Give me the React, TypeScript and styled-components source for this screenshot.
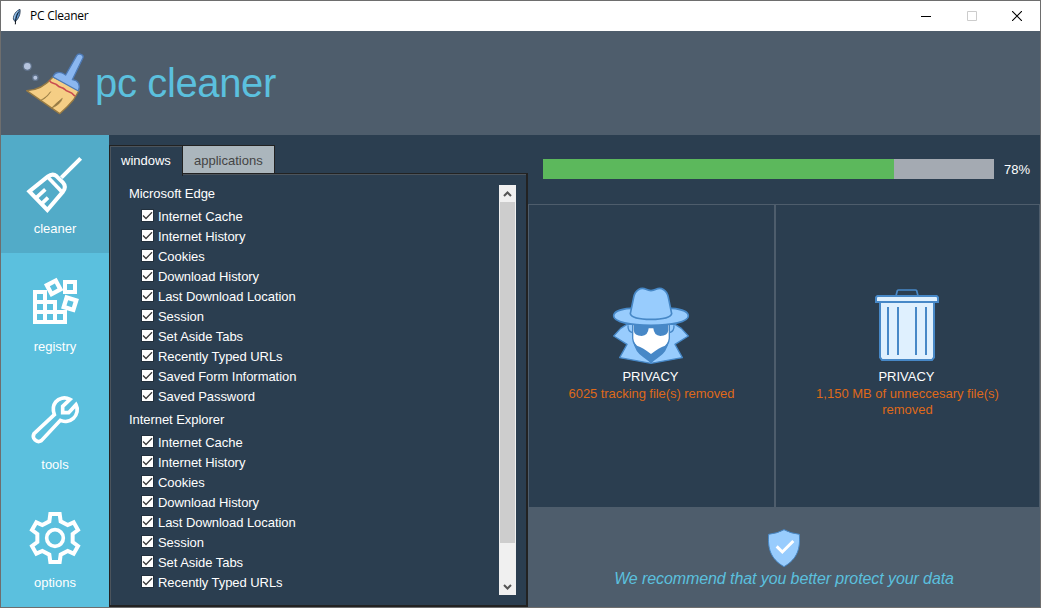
import React from "react";
import styled, { createGlobalStyle } from "styled-components";

const c = {
  bg: "#2b3e50",
  panel: "#4e5d6c",
  info: "#5bc0de",
  infoActive: "#52abc8",
  dark: "#222222",
  blue: "#98ccfd",
  blueLine: "#4788c7",
  orange: "#df691a",
};

const Global = createGlobalStyle`
  * { box-sizing: border-box; }
  body { margin: 0; font-family: "Liberation Sans", Arial, sans-serif; font-size: 13px; color: #fff; }
  svg { display: block; flex: none; }
`;

const Window = styled.div`
  width: 1041px;
  height: 608px;
  border: 1px solid #6e6e6e;
  background: ${c.bg};
  display: flex;
  flex-direction: column;
  overflow: hidden;
`;

const TitleBar = styled.div`
  height: 30px;
  flex: none;
  background: #fff;
  color: #000;
  display: flex;
  align-items: center;
  padding-left: 9px;
`;

const Title = styled.span`
  flex: 1;
  margin-left: 6px;
  font: 12px/16px "Open Sans", "Noto Sans", sans-serif;
  letter-spacing: -0.25px;
`;

const WindowButton = styled.div`
  width: 45.5px;
  height: 30px;
  display: flex;
  align-items: center;
  justify-content: center;
`;

const Header = styled.header`
  height: 104px;
  flex: none;
  background: ${c.panel};
  display: flex;
  align-items: center;
  padding-left: 20px;
`;

const Brand = styled.h1`
  margin: 0 0 0 8px;
  font-size: 40px;
  line-height: 46px;
  font-weight: 400;
  letter-spacing: -0.36px;
  color: ${c.info};
`;

const Body = styled.div`
  display: flex;
  flex: 1;
  min-height: 0;
`;

const Sidebar = styled.nav`
  width: 108px;
  flex: none;
  background: ${c.info};
`;

const NavItem = styled.div<{ $active?: boolean }>`
  height: 118px;
  padding-top: 18px;
  display: flex;
  flex-direction: column;
  align-items: center;
  background: ${(p) => (p.$active ? c.infoActive : c.info)};
`;

const NavLabel = styled.span`
  margin-top: 4px;
  line-height: 15px;
`;

const Notebook = styled.section`
  width: 419px;
  flex: none;
  padding-top: 10px;
  display: flex;
  flex-direction: column;
`;

const Tabs = styled.div`
  display: flex;
  height: 29px;
  margin-bottom: -1px;
  position: relative;
`;

const Tab = styled.div<{ $active?: boolean }>`
  width: ${(p) => (p.$active ? 74 : 92)}px;
  height: ${(p) => (p.$active ? 31 : 29)}px;
  line-height: 30px;
  padding-left: 11px;
  border: 1px solid ${c.dark};
  border-bottom-width: ${(p) => (p.$active ? 0 : 1)}px;
  border-left-width: ${(p) => (p.$active ? 1 : 0)}px;
  box-shadow: ${(p) => (p.$active ? "inset 1px 1px #4c545c" : "none")};
  background: ${(p) => (p.$active ? c.bg : "#abb6bd")};
  color: ${(p) => (p.$active ? "#fff" : "#444")};
`;

const Pane = styled.div`
  flex: 1;
  min-height: 0;
  border: 1px solid ${c.dark};
  border-right-width: 2px;
  border-bottom-width: 2px;
  box-shadow: inset 1px 1px #4c545c;
  display: flex;
  justify-content: space-between;
  padding: 6px 10px 0 19px;
`;

const List = styled.div`
  display: flex;
  flex-direction: column;
  letter-spacing: -0.05px;
`;

const GroupTitle = styled.div`
  height: 26px;
  line-height: 28px;
`;

const Row = styled.label`
  height: 20px;
  display: flex;
  align-items: center;
  padding-left: 12px;
  gap: 4px;
  white-space: nowrap;
`;

const Box = styled.span`
  width: 13px;
  height: 13px;
  margin-bottom: 2px;
  background: #fff;
  border: 1px solid #22303d;
`;

const Scrollbar = styled.div`
  width: 17px;
  height: 410px;
  margin-top: 5px;
  background: #f0f0f0;
  display: flex;
  flex-direction: column;
  justify-content: space-between;
  align-items: center;
`;

const Thumb = styled.div`
  width: 15px;
  height: 341px;
  margin-bottom: auto;
  background: #cdcdcd;
`;

const Right = styled.main`
  flex: 1;
  display: flex;
  flex-direction: column;
`;

const ProgressRow = styled.div`
  height: 69px;
  display: flex;
  align-items: flex-start;
  padding: 24px 0 0 15px;
  gap: 10px;
  line-height: 21px;
`;

const Track = styled.div`
  width: 451px;
  height: 20px;
  background: #a4aab2;
`;

const Fill = styled.div`
  height: 100%;
  background: #5cb85c;
`;

const Cards = styled.div`
  height: 303px;
  display: flex;
  border: 1px solid ${c.panel};
  border-bottom: 0;
`;

const Card = styled.div<{ $first?: boolean }>`
  width: ${(p) => (p.$first ? 247 : 263)}px;
  border-right: ${(p) => (p.$first ? `2px solid ${c.panel}` : "0")};
  display: flex;
  flex-direction: column;
  align-items: center;
  padding: 80px 2px 0 0;
  line-height: 16px;
  text-align: center;
`;

const CardIcon = styled.div`
  height: 84px;
  display: flex;
  align-items: center;
  padding-bottom: 5px;
`;

const Result = styled.span<{ $tight?: boolean }>`
  position: relative;
  top: 1px;
  left: 1px;
  color: ${c.orange};
  white-space: pre-line;
  letter-spacing: ${(p) => (p.$tight ? "-0.06px" : "0")};
`;

const Footer = styled.footer`
  flex: 1;
  background: ${c.panel};
  display: flex;
  flex-direction: column;
  align-items: center;
  padding-top: 21px;
`;

const Advice = styled.span`
  margin-top: 1px;
  font-size: 16px;
  line-height: 20px;
  font-style: italic;
  letter-spacing: -0.09px;
  color: ${c.info};
`;

const NavIcon = ({ top, children }: { top: number; children: React.ReactNode }) => (
  <svg width="64" height="64" viewBox={`69 ${top} 192 192`} fill="none" stroke="#fff" strokeWidth="12">
    {children}
  </svg>
);

const nav = [
  {
    label: "cleaner",
    icon: (
      <NavIcon top={54}>
        <path d="M242 70L184 128" />
        <path d="M88 169L143 125Q158 113 170 124L189 143Q200 155 189 170L142 225Z" />
        <path d="M141 124L184 169" strokeWidth="11" />
        <path d="M110 187L136 163M126 205L144 188" strokeWidth="11" />
      </NavIcon>
    ),
  },
  {
    label: "registry",
    icon: (
      <NavIcon top={48}>
        <path d="M105 111h30v90h-30zM135 141h30v60h-30zM165 171h30v30h-30zM105 141h30M105 171h60M195 81h30v30h-30z" />
        <g strokeWidth="13">
          <rect x="146" y="82" width="30" height="30" transform="rotate(-28 161 97)" />
          <rect x="195" y="131" width="30" height="30" transform="rotate(17 210 146)" />
        </g>
      </NavIcon>
    ),
  },
  {
    label: "tools",
    icon: (
      <NavIcon top={42}>
        <path d="M210 73C193 64 176 70 167 81C160 90 158 105 163 119L102 176A15.8 15.8 0 0 0 124 197L181 136C195 142 211 138 220 130C232 119 235 102 228 89L206 113H188V94Z" strokeWidth="11" />
      </NavIcon>
    ),
  },
  {
    label: "options",
    icon: (
      <NavIcon top={51}>
        <path d="M151 72H179L182 94L203 105L221 97L234 120L218 132V156L234 168L221 191L203 183L182 194L179 216H151L148 194L127 183L109 191L96 168L112 156V132L96 120L109 97L127 105L148 94Z" />
        <circle cx="165" cy="144" r="25" strokeWidth="11" />
      </NavIcon>
    ),
  },
];

const Feather = () => (
  <svg width="14" height="18" viewBox="30 15 42 54">
    <path d="M60 22C49 26 40 38 40 51L45 59C56 51 62 36 60 22Z" fill="#5b93cc" stroke="#26364a" strokeWidth="2.5" />
    <path d="M57 28C50 38 47 48 46 67" stroke="#080d14" strokeWidth="3" fill="none" />
    <path d="M55 27C47 34 43 42 43 50" stroke="#a9cdec" strokeWidth="3" fill="none" />
  </svg>
);

const Broom = () => (
  <svg width="66" height="65" viewBox="63 150 198 195">
    <circle cx="82" cy="196" r="14" fill="#60738b" />
    <circle cx="82" cy="196" r="10" fill="#b5c4de" />
    <circle cx="106" cy="230" r="10" fill="#60738b" />
    <circle cx="106" cy="230" r="6" fill="#b5c4de" />
    <path d="M159 228L238 267L220 297Q203 318 179 338L80 269C113 268 137 254 159 228Z" fill="#f5ce85" stroke="#967a44" strokeWidth="4" strokeLinejoin="round" />
    <path d="M152 272Q143 286 121 299Q140 292 152 272ZM187 292Q171 304 155 321Q181 311 187 292Z" fill="#967a44" stroke="#967a44" strokeWidth="2" />
    <path d="M148 238C154 249 164 246 171 252C179 262 187 257 194 265C203 276 209 266 225 286" fill="none" stroke="#c94b50" strokeWidth="5" />
    <path d="M159 228C164 213 180 209 197 222L230 164C236 155 252 160 249 170L217 236C236 238 242 254 235 270Z" fill="#8bb7f0" stroke="#4e7ab5" strokeWidth="4" strokeLinejoin="round" />
  </svg>
);

const Spy = () => (
  <svg width="78" height="78" viewBox="36 45 234 234" strokeLinejoin="round">
    <g fill={c.blue} stroke={c.blueLine} strokeWidth="4">
      <path d="M81 160L62 172L41 195L81 220L59 260L153 277L247 260L225 220L265 195L244 172L225 160Z" />
      <path d="M84 163Q83 181 97 185M222 163Q223 181 209 185" />
    </g>
    <path d="M98 160V202Q100 222 117 235Q135 247 153 275Q171 247 189 235Q206 222 208 202V160Z" fill="#fff" stroke={c.blueLine} strokeWidth="4" />
    <path d="M99 210L111 224Q129 230 153 249Q177 230 195 224L207 210Q200 244 178 257L153 276L128 257Q106 244 99 210Z" fill={c.blueLine} />
    <path d="M101 160H205V178Q203 195 181 195Q162 194 160 172H146Q144 194 125 195Q103 195 101 178Z" fill={c.blueLine} />
    <path d="M91 112C57 114 41 124 41 135C41 153 91 163 153 163S265 153 265 135C265 124 249 114 215 112Z" fill={c.blue} stroke={c.blueLine} strokeWidth="5" />
    <path d="M91 128L101 79C105 58 122 47 138 55C148 60 158 60 168 55C184 47 201 58 205 79L215 128C211 141 184 145 153 145S95 141 91 128Z" fill={c.blue} stroke={c.blueLine} strokeWidth="5" />
  </svg>
);

const Trash = () => (
  <svg width="66" height="75" viewBox="42 51 198 225" fill="#dff0fe" stroke={c.blueLine} strokeWidth="6">
    <path d="M108 77L112 62Q113 60 116 60H166Q169 60 170 62L174 77" fill="none" strokeWidth="5" />
    <path d="M60 96H222V262L216 270H66L60 262Z" />
    <path d="M48 96V82L52 78H230L234 82V96Z" />
    <path d="M84 111V255M114 111V255M168 111V255M198 111V255" />
  </svg>
);

const Shield = () => (
  <svg width="36" height="40" viewBox="78 84 108 120">
    <path d="M132 89Q151 100 178 103C181 143 174 176 132 200C90 176 83 143 86 103Q113 100 132 89Z" fill={c.blue} stroke={c.blueLine} strokeWidth="3" />
    <path d="M110 139L127 156L160 123" fill="none" stroke="#fff" strokeWidth="9" />
  </svg>
);

const Check = () => (
  <svg width="11" height="11" viewBox="0 0 11 11">
    <path d="M1 5.5L4 8.5L10 2.2" fill="none" stroke="#3a3a3a" strokeWidth="1.25" />
  </svg>
);

const Arrow = ({ down }: { down?: boolean }) => (
  <svg width="17" height="17" viewBox="0 0 17 17">
    <path d={down ? "M5 7L8.5 10.5L12 7" : "M5 11L8.5 7.5L12 11"} fill="none" stroke="#555" strokeWidth="2" />
  </svg>
);

const items = [
  "Internet Cache",
  "Internet History",
  "Cookies",
  "Download History",
  "Last Download Location",
  "Session",
  "Set Aside Tabs",
  "Recently Typed URLs",
  "Saved Form Information",
  "Saved Password",
];

const groups = [
  { title: "Microsoft Edge", items },
  { title: "Internet Explorer", items: items.slice(0, 8) },
];

export default function App() {
  const progress = 78;
  return (
    <>
      <Global />
      <Window>
        <TitleBar>
          <Feather />
          <Title>PC Cleaner</Title>
          <WindowButton>
            <svg width="10" height="10"><path d="M0 5.5H10" stroke="#000" /></svg>
          </WindowButton>
          <WindowButton>
            <svg width="10" height="10"><path d="M.5.5H9.5V9.5H.5Z" fill="none" stroke="#ccc" /></svg>
          </WindowButton>
          <WindowButton>
            <svg width="10" height="10"><path d="M0 0L10 10M10 0L0 10" stroke="#000" strokeWidth="1.1" /></svg>
          </WindowButton>
        </TitleBar>
        <Header>
          <Broom />
          <Brand>pc cleaner</Brand>
        </Header>
        <Body>
          <Sidebar>
            {nav.map((n, i) => (
              <NavItem key={n.label} $active={i === 0}>
                {n.icon}
                <NavLabel>{n.label}</NavLabel>
              </NavItem>
            ))}
          </Sidebar>
          <Notebook>
            <Tabs>
              <Tab $active>windows</Tab>
              <Tab>applications</Tab>
            </Tabs>
            <Pane>
              <List>
                {groups.map((g) => (
                  <React.Fragment key={g.title}>
                    <GroupTitle>{g.title}</GroupTitle>
                    {g.items.map((t) => (
                      <Row key={t}>
                        <Box><Check /></Box>
                        {t}
                      </Row>
                    ))}
                  </React.Fragment>
                ))}
              </List>
              <Scrollbar>
                <Arrow />
                <Thumb />
                <Arrow down />
              </Scrollbar>
            </Pane>
          </Notebook>
          <Right>
            <ProgressRow>
              <Track><Fill style={{ width: `${progress - 0.2}%` }} /></Track>
              {progress}%
            </ProgressRow>
            <Cards>
              <Card $first>
                <CardIcon><Spy /></CardIcon>
                <span>PRIVACY</span>
                <Result $tight>6025 tracking file(s) removed</Result>
              </Card>
              <Card>
                <CardIcon><Trash /></CardIcon>
                <span>PRIVACY</span>
                <Result>{"1,150 MB of unneccesary file(s)\nremoved"}</Result>
              </Card>
            </Cards>
            <Footer>
              <Shield />
              <Advice>We recommend that you better protect your data</Advice>
            </Footer>
          </Right>
        </Body>
      </Window>
    </>
  );
}
